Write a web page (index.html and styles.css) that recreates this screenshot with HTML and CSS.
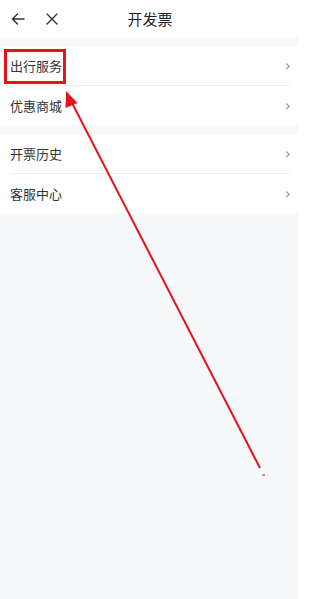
FILE: index.html
```html
<!DOCTYPE html>
<html lang="zh-CN">
<head>
<meta charset="utf-8">
<link rel="stylesheet" href="styles.css">
</head>
<body>
<div class="page">
  <header class="topbar">
    <div class="nav-icons">
      <svg class="icon" width="16" height="16" viewBox="0 0 16 16"><path d="M14 8H2.5M7.5 3L2.5 8l5 5" fill="none" stroke="#333" stroke-width="1.5" stroke-linecap="round" stroke-linejoin="round"/></svg>
      <svg class="icon" width="14" height="14" viewBox="0 0 14 14"><path d="M2 2l10 10M12 2L2 12" fill="none" stroke="#333" stroke-width="1.4" stroke-linecap="round"/></svg>
    </div>
    <div class="title">开发票</div>
  </header>
  <main class="content">
    <section class="group">
      <div class="row"><span class="label">出行服务</span><span class="chev">›</span></div>
      <div class="row"><span class="label">优惠商城</span><span class="chev">›</span></div>
    </section>
    <section class="group">
      <div class="row"><span class="label">开票历史</span><span class="chev">›</span></div>
      <div class="row"><span class="label">客服中心</span><span class="chev">›</span></div>
    </section>
  </main>
  <div class="highlight"></div>
  <svg class="annotation" width="300" height="599" viewBox="0 0 300 599">
    <line x1="260" y1="468" x2="71" y2="101" stroke="#e4141b" stroke-width="2"/>
    <polygon points="66,91 77.5,103 65.5,108" fill="#e4141b"/>
    <line x1="262" y1="475" x2="265" y2="475" stroke="#e4141b" stroke-width="1"/>
  </svg>
</div>
</body>
</html>
```
FILE: styles.css
```css
* { box-sizing: border-box; }
html, body {
  margin: 0;
  padding: 0;
  background: #ffffff;
}
body {
  font-family: "Noto Sans CJK SC", "Noto Sans", sans-serif;
  color: #333;
}
.page {
  position: relative;
  width: 300px;
  height: 599px;
  overflow: hidden;
  background: #ffffff;
}
.topbar {
  position: relative;
  height: 37px;
  background: #fff;
  display: flex;
  align-items: center;
  padding-left: 10px;
}
.nav-icons {
  display: flex;
  align-items: center;
  gap: 19px;
}
.icon { display: block; }
.title {
  position: absolute;
  left: 0;
  right: 0;
  top: 0;
  height: 37px;
  line-height: 37px;
  text-align: center;
  font-size: 15px;
  color: #222;
  pointer-events: none;
}
.content {
  background: #f7f8fa;
  margin-right: 2px;
  height: 562px;
  padding-top: 9px;
  display: flex;
  flex-direction: column;
  gap: 9px;
}
.group {
  background: #fff;
  margin-right: -2px;
}
.row {
  height: 40px;
  margin-left: 10px;
  margin-right: 10px;
  display: flex;
  align-items: center;
  justify-content: space-between;
  border-bottom: 1px solid #f0f0f0;
}
.row:last-child { border-bottom: none; height: 39px; }
.label {
  font-size: 13px;
  color: #333;
}
.chev {
  font-family: "DejaVu Sans", sans-serif;
  font-size: 16px;
  color: #999;
  margin-right: -1px;
  line-height: 1;
}
.highlight {
  position: absolute;
  left: 4px;
  top: 49px;
  width: 62px;
  height: 35px;
  border: 3px solid #e4141b;
}
.annotation {
  position: absolute;
  left: 0;
  top: 0;
  pointer-events: none;
}
```
